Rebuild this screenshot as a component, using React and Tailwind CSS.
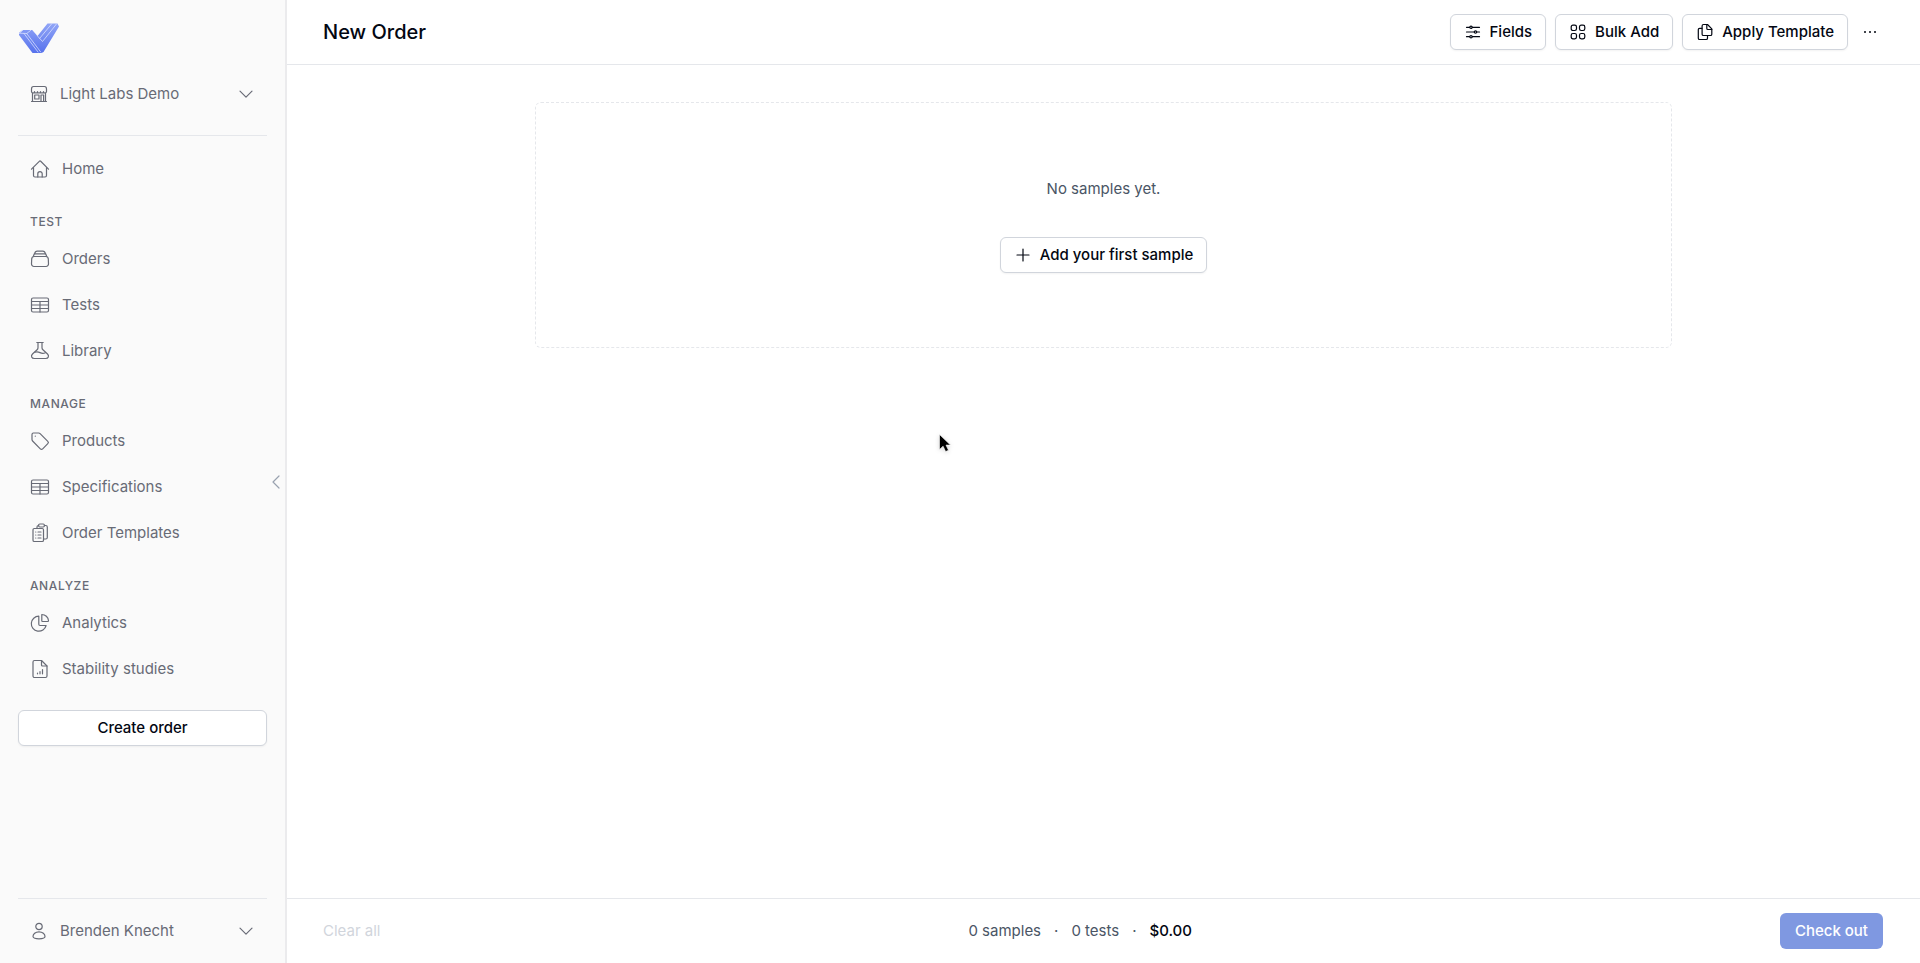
// App.jsx
import { useState } from "react";

function Icon({ size = 20, strokeWidth = 1.2, className = "", children }) {
  return (
    <svg
      width={size}
      height={size}
      viewBox={`0 0 ${size} ${size}`}
      fill="none"
      stroke="currentColor"
      strokeWidth={strokeWidth}
      strokeLinecap="round"
      strokeLinejoin="round"
      className={`shrink-0 ${className}`}
      aria-hidden="true"
    >
      {children}
    </svg>
  );
}

function HomeIcon() {
  return (
    <Icon>
      <path d="M1.5 10.2 9.3 2.3a1 1 0 0 1 1.4 0l7.8 7.9" />
      <path d="M3.5 8.5v8A1.5 1.5 0 0 0 5 18h10a1.5 1.5 0 0 0 1.5-1.5v-8" />
      <path d="M7.8 18v-3.2a2.2 2.2 0 0 1 4.4 0V18" />
    </Icon>
  );
}

function OrdersIcon() {
  return (
    <Icon>
      <path d="M4.2 7.5h11.6c1.4 0 2.4 1 2.5 2.4l.2 4.9a2.5 2.5 0 0 1-2.5 2.7H4a2.5 2.5 0 0 1-2.5-2.7l.2-4.9c.1-1.4 1.1-2.4 2.5-2.4Z" />
      <path d="M3.3 7.5 4.2 4.9h11.6l.9 2.6" />
      <path d="M4.6 4.9c.3-1.5 1.1-2.7 2.6-2.7h5.6c1.5 0 2.3 1.2 2.6 2.7" />
    </Icon>
  );
}

function TableIcon() {
  return (
    <Icon>
      <rect x="1.5" y="3" width="17" height="14" rx="1.5" />
      <path d="M1.5 6.5h17M1.5 10h17M1.5 13.5h17M10 6.5V17" />
    </Icon>
  );
}

function FlaskIcon() {
  return (
    <Icon>
      <path d="M6.8 1.5h6.4M8 1.5v5.3c0 .8-.3 1.500-.9 2L2.500 13c-2 2-.8 4.500 1.800 4.500h11.400c2.600 0 3.800-2.500 1.800-4.500l-4.600-4.200c-.6-.5-.9-1.200-.9-2V1.500" />
      <path d="M4.800 11.300c2-.9 3.600-.5 5.200.3 1.600.8 3.400 1.100 5.300.1" />
    </Icon>
  );
}

function TagIcon() {
  return (
    <Icon>
      <path d="M3.4 2h5.200c.6 0 1.100.2 1.500.6l7.700 7.700a1.700 1.700 0 0 1 0 2.400l-5.100 5.100a1.700 1.700 0 0 1-2.400 0L2.600 10a2 2 0 0 1-.6-1.400V3.400C2 2.600 2.600 2 3.400 2Z" />
      <circle cx="5.3" cy="5.2" r=".6" fill="currentColor" stroke="none" />
    </Icon>
  );
}

function ClipboardsIcon() {
  return (
    <Icon>
      <path d="M7 5.500V4c0-.9.600-1.500 1.600-1.500M14.400 2.500h1.400c.9 0 1.500.6 1.500 1.500v10.500c0 .9-.6 1.500-1.500 1.500h-2.300" />
      <rect x="8.6" y="1" width="5.8" height="3" rx="1.2" />
      <rect x="3" y="5.5" width="10.5" height="13" rx="1.3" />
      <path d="M5.7 9h.1M8 9h3M5.7 12h.1M8 12h3M5.7 15h.1M8 15h3" />
    </Icon>
  );
}

function PieIcon() {
  return (
    <Icon>
      <path d="M8.8 3.2a7.5 7.5 0 1 0 7.3 9.3H10a1.2 1.2 0 0 1-1.2-1.2V3.2Z" />
      <path d="M11.8 1.5a6.7 6.7 0 0 1 6.7 6.2c0 .4-.3.8-.8.8h-5.2a.7.7 0 0 1-.7-.7V1.5Z" />
    </Icon>
  );
}

function FileChartIcon() {
  return (
    <Icon>
      <path d="M4.5 1.5h7L17 7v10c0 .8-.7 1.5-1.5 1.5h-11c-.8 0-1.5-.7-1.5-1.5V3c0-.8.7-1.5 1.5-1.5Z" />
      <path d="M11.5 1.5V6c0 .6.4 1 1 1H17" />
      <path d="M7.5 14v.8M10 12.5v2.3M12.5 10.5v4.3" />
    </Icon>
  );
}

function StoreIcon() {
  return (
    <Icon size={18}>
      <path d="M1.5 6.5V4c0-1.4.7-2.5 2-2.5h11c1.3 0 2 1.1 2 2.5v2.5" />
      <path d="M1.5 6.5a1.5 1.5 0 0 0 3 0 1.5 1.5 0 0 0 3 0 1.5 1.5 0 0 0 3 0 1.5 1.5 0 0 0 3 0 1.5 1.5 0 0 0 3 0" />
      <path d="M2.5 8.2v8.3M15.5 8.2v8.3M1.5 16.5h15M11 16.5V10h2.6v6.5" />
      <rect x="4.7" y="10" width="4.3" height="4" />
    </Icon>
  );
}

function UserIcon() {
  return (
    <Icon size={18}>
      <circle cx="9" cy="4.5" r="3.2" />
      <path d="M9 9.8c3.6 0 6 2.4 6 4.8 0 1.5-2.6 2.2-6 2.2s-6-.7-6-2.2c0-2.4 2.4-4.8 6-4.8Z" />
    </Icon>
  );
}

function ChevronDownIcon() {
  return (
    <Icon size={18}>
      <path d="m3 6.2 6 6 6-6" />
    </Icon>
  );
}

function SlidersIcon() {
  return (
    <Icon size={18}>
      <path d="M2.5 4.3h3.2M8.3 4.3h7.2M2.5 9h7.7M12.8 9h2.7M2.5 13.7h3.2M8.3 13.7h7.2" />
      <circle cx="7" cy="4.3" r="1.2" />
      <circle cx="11.5" cy="9" r="1.2" />
      <circle cx="7" cy="13.7" r="1.2" />
    </Icon>
  );
}

function GridIcon() {
  return (
    <Icon size={18}>
      <rect x="2.2" y="2.2" width="5.3" height="5.3" rx="1.7" />
      <rect x="10.5" y="2.2" width="5.3" height="5.3" rx="1.7" />
      <rect x="2.2" y="10.5" width="5.3" height="5.3" rx="1.7" />
      <rect x="10.5" y="10.5" width="5.3" height="5.3" rx="1.7" />
    </Icon>
  );
}

function CopyIcon() {
  return (
    <Icon size={18}>
      <path d="M7.5 1.5h4l4.3 4.3v5.4c0 .8-.6 1.3-1.3 1.3h-7c-.8 0-1.4-.5-1.4-1.3V2.900c0-.8.600-1.400 1.400-1.400Z" />
      <path d="M10.8 1.5v4c0 .6.4 1 1 1h4" />
      <path d="M6 5.3H3.6c-.8 0-1.3.6-1.3 1.3v8.6c0 .8.5 1.3 1.3 1.3h6.6c.8 0 1.3-.5 1.3-1.3v-2.5" />
    </Icon>
  );
}

function PlusIcon() {
  return (
    <Icon size={18}>
      <path d="M9 3v12M3 9h12" />
    </Icon>
  );
}

function Logo() {
  return (
    <svg width="42" height="31" viewBox="0 0 42 31" fill="none" role="img" aria-label="Light Labs">
      <defs>
        <linearGradient id="logo-fill" x1="20" y1="0" x2="20" y2="31" gradientUnits="userSpaceOnUse">
          <stop stopColor="#92a6f7" />
          <stop offset="1" stopColor="#5570ec" />
        </linearGradient>
      </defs>
      <path
        d="M1 9.7 4.7 7h9.5l5.3 6L29.5.5h10L41 3.5 25.5 29l-2 1h-9L1 12Z"
        fill="url(#logo-fill)"
      />
      <g stroke="#e4e9ff" strokeWidth=".7" strokeLinejoin="round" strokeLinecap="round">
        <path d="m1.5 10.2 7.2.3 4.1-3.2" />
        <path d="M4.8 7.2 1.5 10.2" />
        <path d="m8.7 10.5 14 18.5" />
        <path d="m6 10.5 14 18.5" />
        <path d="m19.5 13 5 5.5L38.5 1" />
        <path d="m21.8 15.2 12-14.5" />
      </g>
    </svg>
  );
}

const sections = [
  { items: [{ label: "Home", icon: HomeIcon }] },
  {
    title: "TEST",
    items: [
      { label: "Orders", icon: OrdersIcon },
      { label: "Tests", icon: TableIcon },
      { label: "Library", icon: FlaskIcon },
    ],
  },
  {
    title: "MANAGE",
    items: [
      { label: "Products", icon: TagIcon },
      { label: "Specifications", icon: TableIcon },
      { label: "Order Templates", icon: ClipboardsIcon },
    ],
  },
  {
    title: "ANALYZE",
    items: [
      { label: "Analytics", icon: PieIcon },
      { label: "Stability studies", icon: FileChartIcon },
    ],
  },
];

function MenuButton({ icon: IconComponent, label }) {
  return (
    <button className="flex w-full items-center gap-3 px-3 text-left">
      <IconComponent />
      <span className="flex-1">{label}</span>
      <ChevronDownIcon />
    </button>
  );
}

function Sidebar() {
  return (
    <aside className="relative flex w-[287px] shrink-0 flex-col border-r-2 border-[#ebebed] bg-[#fafafa] px-[18px] text-[#686b76]">
      <div className="pt-[23px]">
        <Logo />
      </div>

      <div className="mt-7 border-b border-gray-200 pb-[29px]">
        <MenuButton icon={StoreIcon} label="Light Labs Demo" />
      </div>

      {/* Navigation */}
      <nav className="mt-[10px]">
        {sections.map((section) => (
          <div key={section.items[0].label}>
            {section.title && (
              <h2 className="mt-5 mb-1 pl-3 text-xs leading-5 font-medium tracking-wider">
                {section.title}
              </h2>
            )}
            {section.items.map(({ label, icon: IconComponent }) => (
              <a key={label} href="#" className="flex h-[46px] items-center gap-3 px-3">
                <IconComponent />
                {label}
              </a>
            ))}
          </div>
        ))}
      </nav>

      <button className="mt-[18px] h-9 rounded-md border border-gray-300 bg-white font-medium text-gray-950 shadow-xs">
        Create order
      </button>

      {/* Account */}
      <div className="mt-auto flex h-[65px] items-center border-t border-gray-200">
        <MenuButton icon={UserIcon} label="Brenden Knecht" />
      </div>

      {/* Collapse handle */}
      <button
        aria-label="Collapse sidebar"
        className="absolute top-1/2 right-0 -translate-y-1/2 text-gray-400"
      >
        <Icon size={18}>
          <path d="M12 3 6 9l6 6" />
        </Icon>
      </button>
    </aside>
  );
}

function OutlineButton({ icon: IconComponent, children, onClick }) {
  return (
    <button
      onClick={onClick}
      className="flex h-9 items-center gap-2 rounded-md border border-gray-300 bg-white px-[13px] font-medium text-gray-950 shadow-xs"
    >
      <IconComponent />
      {children}
    </button>
  );
}

function App() {
  const [samples, setSamples] = useState([]);

  const addSample = () => {
    setSamples((prev) => [...prev, { id: prev.length + 1 }]);
  };

  return (
    <div className="relative flex min-h-screen bg-white font-['Inter',sans-serif] text-[15px] leading-6 text-gray-600">
      <Sidebar />

      <div className="flex flex-1 flex-col">
        {/* Header */}
        <header className="flex h-[65px] items-center justify-between border-b border-gray-200 pr-[37px] pl-9">
          <h1 className="text-xl font-medium text-gray-950">New Order</h1>
          <div className="flex items-center gap-[9px]">
            <OutlineButton icon={SlidersIcon}>Fields</OutlineButton>
            <OutlineButton icon={GridIcon}>Bulk Add</OutlineButton>
            <OutlineButton icon={CopyIcon}>Apply Template</OutlineButton>
            <button aria-label="More" className="px-1 text-gray-950">
              <svg width="18" height="18" viewBox="0 0 18 18" fill="currentColor" aria-hidden="true">
                <circle cx="4" cy="9" r="1" />
                <circle cx="9" cy="9" r="1" />
                <circle cx="14" cy="9" r="1" />
              </svg>
            </button>
          </div>
        </header>

        {/* Samples */}
        <main className="flex-1 px-9 pt-[37px]">
          <div className="mx-auto flex max-w-[1137px] flex-col items-center gap-9 rounded-md border border-dashed border-gray-200 py-[74px]">
            <p>{samples.length === 0 ? "No samples yet." : `${samples.length} added.`}</p>
            <OutlineButton icon={PlusIcon} onClick={addSample}>
              Add your first sample
            </OutlineButton>
          </div>
        </main>

        {/* Footer */}
        <footer className="flex h-[65px] items-center justify-between border-t border-gray-200 pr-[37px] pl-9">
          <button className="text-gray-300" onClick={() => setSamples([])}>
            Clear all
          </button>
          <div className="flex items-center gap-[13px]">
            <span>{samples.length} samples</span>
            <span>·</span>
            <span>0 tests</span>
            <span>·</span>
            <span className="font-medium text-gray-950">$0.00</span>
          </div>
          <button className="h-9 rounded-md bg-[#7f98e1] px-[15px] font-medium text-white">
            Check out
          </button>
        </footer>
      </div>

      {/* Pointer */}
      <svg
        width="16"
        height="22"
        viewBox="0 0 16 22"
        className="pointer-events-none absolute top-[433px] left-[938px] drop-shadow-sm"
        aria-hidden="true"
      >
        <path
          d="M1.5 1.5v15l3.6-3.3 2.5 5.4 2.9-1.3-2.5-5.2h4.5Z"
          fill="#000"
          stroke="#fff"
          strokeWidth=".6"
        />
      </svg>
    </div>
  );
}

export default App;
